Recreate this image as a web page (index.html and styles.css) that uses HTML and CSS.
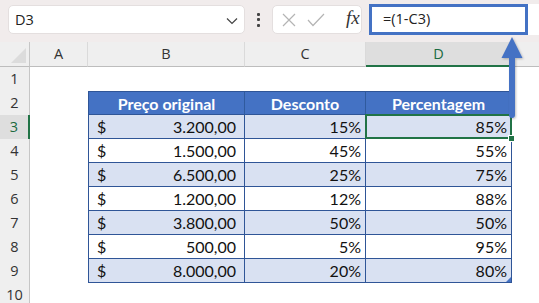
FILE: index.html
```html
<!DOCTYPE html>
<html lang="pt">
<head>
  <meta charset="UTF-8">
  <meta name="viewport" content="width=device-width, initial-scale=1.0">
  <title>Preço com desconto</title>
  <link rel="stylesheet" href="styles.css">
</head>
<body>
  <div class="topbar">
    <div class="namebox">
      <span>D3</span>
      <svg class="chevron" width="12" height="8" viewBox="0 0 12 8"><path d="M1 1.5 L6 6.5 L11 1.5" fill="none" stroke="#444" stroke-width="1.2"/></svg>
    </div>
    <div class="kebab"><i></i><i></i><i></i></div>
    <div class="fxbox">
      <svg width="14" height="14" viewBox="0 0 14 14"><path d="M1 1 L13 13 M13 1 L1 13" stroke="#b4b4b4" stroke-width="1.2" fill="none"/></svg>
      <svg width="18" height="14" viewBox="0 0 18 14"><path d="M1 7 L6 12.5 L17 1" stroke="#b4b4b4" stroke-width="1.2" fill="none"/></svg>
      <span class="fx">fx</span>
    </div>
    <div class="formula-wrap">
      <div class="formula">=(1-C3)</div>
    </div>
  </div>

  <div class="sheet">
    <div class="corner"><span class="tri"></span></div>
    <div class="colhead">A</div>
    <div class="colhead">B</div>
    <div class="colhead">C</div>
    <div class="colhead active">D</div>
    <div class="colhead last"></div>

    <div class="rowhead">1</div>
    <div class="blank"></div><div class="blank"></div><div class="blank"></div><div class="blank"></div><div class="blank"></div>

    <div class="rowhead">2</div>
    <div class="blank"></div>
    <div class="th first">Preço original</div>
    <div class="th">Desconto</div>
    <div class="th">Percentagem</div>
    <div class="blank"></div>

    <div class="rowhead active">3</div>
    <div class="blank"></div>
    <div class="td first band"><span>$</span><span>3.200,00</span></div>
    <div class="td band num">15%</div>
    <div class="td band num selected">85%</div>
    <div class="blank"></div>

    <div class="rowhead">4</div>
    <div class="blank"></div>
    <div class="td first"><span>$</span><span>1.500,00</span></div>
    <div class="td num">45%</div>
    <div class="td num">55%</div>
    <div class="blank"></div>

    <div class="rowhead">5</div>
    <div class="blank"></div>
    <div class="td first band"><span>$</span><span>6.500,00</span></div>
    <div class="td band num">25%</div>
    <div class="td band num">75%</div>
    <div class="blank"></div>

    <div class="rowhead">6</div>
    <div class="blank"></div>
    <div class="td first"><span>$</span><span>1.200,00</span></div>
    <div class="td num">12%</div>
    <div class="td num">88%</div>
    <div class="blank"></div>

    <div class="rowhead">7</div>
    <div class="blank"></div>
    <div class="td first band"><span>$</span><span>3.800,00</span></div>
    <div class="td band num">50%</div>
    <div class="td band num">50%</div>
    <div class="blank"></div>

    <div class="rowhead">8</div>
    <div class="blank"></div>
    <div class="td first"><span>$</span><span>500,00</span></div>
    <div class="td num">5%</div>
    <div class="td num">95%</div>
    <div class="blank"></div>

    <div class="rowhead">9</div>
    <div class="blank"></div>
    <div class="td first band"><span>$</span><span>8.000,00</span></div>
    <div class="td band num">20%</div>
    <div class="td band num table-end">80%</div>
    <div class="blank"></div>

    <div class="rowhead">10</div>
    <div class="blank"></div><div class="blank"></div><div class="blank"></div><div class="blank"></div><div class="blank"></div>
  </div>

  <!-- callout arrow pointing from D3 up to the formula bar -->
  <svg class="callout" width="30" height="90" viewBox="0 0 30 90">
    <defs>
      <filter id="sh" x="-50%" y="-20%" width="200%" height="140%">
        <feDropShadow dx="1" dy="1" stdDeviation="1" flood-color="#000" flood-opacity="0.25"/>
      </filter>
    </defs>
    <g filter="url(#sh)" fill="#4472c4">
      <path d="M12 2 L22.5 23 L1.5 23 Z"/>
      <path d="M9 22 H15 V80 A3 3 0 0 1 9 80 Z"/>
    </g>
  </svg>
</body>
</html>
```

FILE: styles.css
```css
body {
  margin: 0;
  width: 539px;
  height: 303px;
  overflow: hidden;
  background: #fff;
  font-family: "Open Sans", "Noto Sans", sans-serif;
  color: #222;
  position: relative;
}

/* formula bar */
.topbar {
  height: 42px;
  background: #f1ecec;
  display: flex;
  align-items: flex-start;
  padding-top: 5px;
  box-sizing: border-box;
}
.namebox {
  margin-left: 8px;
  width: 237px;
  height: 29px;
  box-sizing: border-box;
  background: #fff;
  border: 1px solid #e4dfdf;
  border-radius: 5px;
  display: flex;
  align-items: center;
  justify-content: space-between;
  padding: 0 6px 0 6px;
  font-size: 14.5px;
}
.chevron {
  margin-top: 2px;
}
.kebab {
  width: 27px;
  height: 29px;
  display: flex;
  flex-direction: column;
  align-items: center;
  justify-content: center;
  gap: 2.5px;
}
.kebab i {
  width: 3px;
  height: 3px;
  background: #444;
  border-radius: 1px;
}
.fxbox {
  width: 90px;
  height: 29px;
  box-sizing: border-box;
  background: #fff;
  border: 1px solid #e4dfdf;
  border-radius: 5px;
  display: flex;
  align-items: center;
  padding-left: 9px;
  gap: 11px;
}
.fx {
  font-family: "Liberation Serif", serif;
  font-style: italic;
  font-size: 19px;
  color: #333;
  margin-left: 10px;
  margin-top: -3px;
}
.formula-wrap {
  flex: 1;
  margin-left: 7px;
  margin-top: -1px;
  height: 31px;
  background: #fff;
}
.formula {
  width: 159px;
  height: 31px;
  box-sizing: border-box;
  border: 3px solid #4472c4;
  padding-left: 11px;
  line-height: 24px;
  font-size: 14.5px;
}

/* grid */
.sheet {
  display: grid;
  grid-template-columns: 30px 58px 157px 121px 146px 1fr;
  grid-template-rows: 24.5px repeat(10, 24px);
}
.corner {
  background: #efefef;
  border-right: 1px solid #c6c6c6;
  border-bottom: 1px solid #bdbdbd;
  position: relative;
}
.corner .tri {
  position: absolute;
  right: 3px;
  bottom: 3px;
  width: 0;
  height: 0;
  border-left: 15px solid transparent;
  border-bottom: 15px solid #dcdcdc;
}
.colhead {
  background: #efefef;
  border-right: 1px solid #dadada;
  border-bottom: 1px solid #bdbdbd;
  text-align: center;
  font-size: 14.5px;
  line-height: 24px;
  color: #333;
}
.colhead.active {
  background: #dedede;
  color: #1b6b3f;
  border-bottom: 2px solid #217346;
}
.colhead.last {
  border-right: none;
}
.rowhead {
  background: #efefef;
  border-right: 1px solid #c6c6c6;
  text-align: center;
  font-size: 14.5px;
  line-height: 24px;
  color: #333;
}
.rowhead.active {
  background: #dedede;
  color: #1b6b3f;
  border-right: 2px solid #217346;
}

/* data table */
.th, .td {
  font-family: Lato, "Liberation Sans", sans-serif;
  font-size: 16px;
  line-height: 23px;
  border-right: 1px solid #2f5597;
  border-bottom: 1px solid #2f5597;
}
.first {
  border-left: 1px solid #2f5597;
}
.th {
  background: #4472c4;
  color: #fff;
  font-weight: bold;
  text-align: center;
  border-top: 1px solid #2f5597;
  border-right-color: #2f5a9e;
}
.td {
  color: #111;
  background: #fff;
}
.td.band {
  background: #d9e1f2;
}
.td.first {
  display: flex;
  justify-content: space-between;
  padding: 0 8px 0 8px;
}
.td.num {
  text-align: right;
  padding-right: 4px;
}
.selected {
  position: relative;
}
.selected::after {
  content: "";
  position: absolute;
  left: -1px;
  top: -1px;
  right: -1px;
  bottom: -1px;
  border: 2px solid #217346;
}
.selected::before {
  content: "";
  position: absolute;
  right: -4px;
  bottom: -4px;
  width: 5px;
  height: 5px;
  background: #217346;
  border: 1px solid #fff;
  z-index: 1;
}
.table-end {
  position: relative;
}
.table-end::after {
  content: "";
  position: absolute;
  right: 0;
  bottom: 0;
  width: 0;
  height: 0;
  border-left: 5px solid transparent;
  border-bottom: 5px solid #4472c4;
}

.callout {
  position: absolute;
  left: 500px;
  top: 35px;
}
```
